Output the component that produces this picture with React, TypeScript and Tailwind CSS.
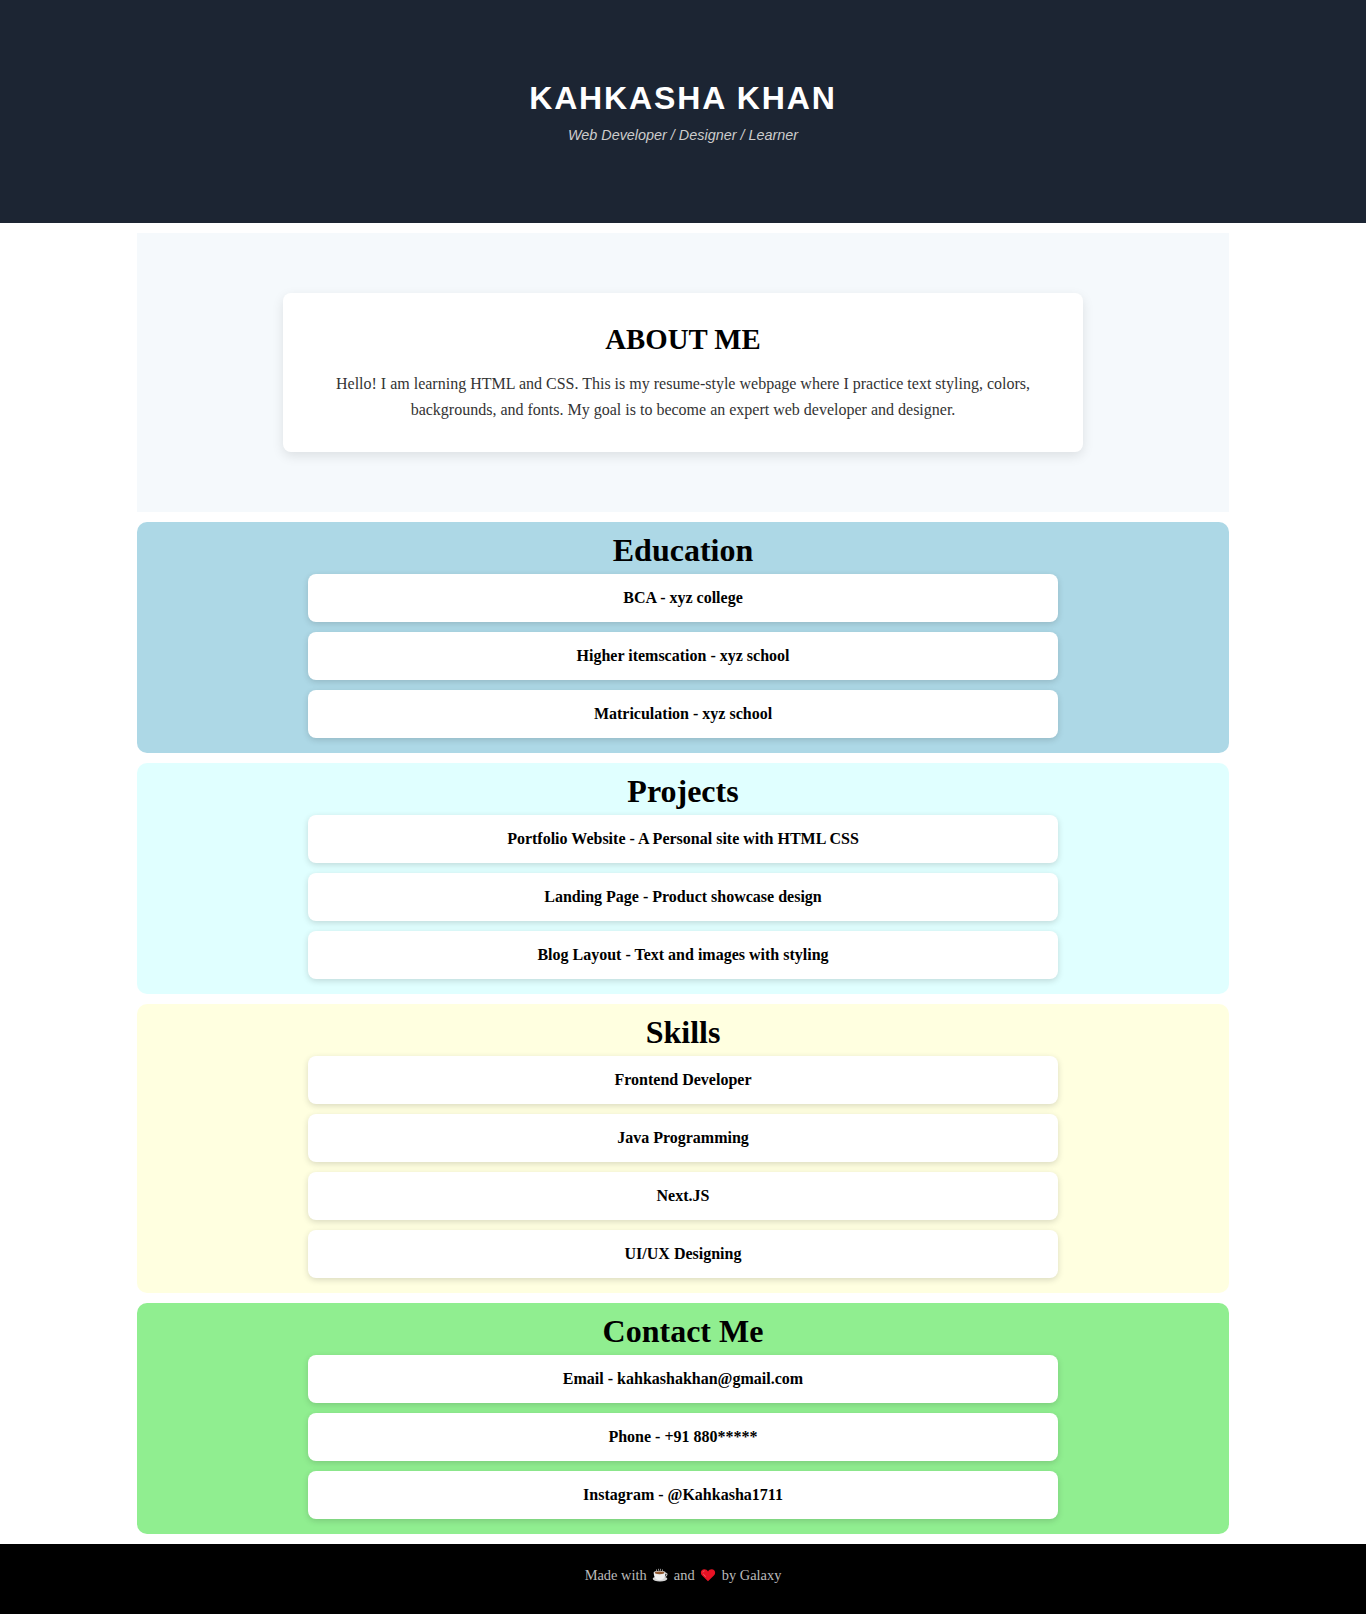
import React from "react";

type Group = { title: string; tone: string; items: string[] };

const groups: Group[] = [
  { title: "Education", tone: "bg-[#add8e6]", items: ["BCA - xyz college", "Higher itemscation - xyz school", "Matriculation - xyz school"] },
  { title: "Projects", tone: "bg-[#e0ffff]", items: ["Portfolio Website - A Personal site with HTML CSS", "Landing Page - Product showcase design", "Blog Layout - Text and images with styling"] },
  { title: "Skills", tone: "bg-[#ffffe0]", items: ["Frontend Developer", "Java Programming", "Next.JS", "UI/UX Designing"] },
  { title: "Contact Me", tone: "bg-[#90ee90]", items: ["Email - kahkashakhan@gmail.com", "Phone - +91 880*****", "Instagram - @Kahkasha1711"] },
];

function Section({ title, tone, items }: Group) {
  return (
    <section className={`mx-auto mb-2.5 w-[1092px] rounded-[10px] pt-2.5 pb-[15px] text-center ${tone}`}>
      <h2 className="text-[32px] leading-[37px] font-bold">{title}</h2>
      <ul className="mx-auto mt-[5px] flex w-[750px] flex-col gap-2.5">
        {items.map((item) => (
          <li key={item} className="rounded-lg bg-white py-[15px] text-base leading-[18px] font-bold shadow-[0_2px_6px_rgba(0,0,0,0.15)]">
            {item}
          </li>
        ))}
      </ul>
    </section>
  );
}

function Coffee() {
  return (
    <svg className="mx-[2px] mt-px h-[15px] w-[16px] shrink-0" viewBox="0 0 16 15" fill="none" aria-label="coffee">
      <path d="M4.5 3.2V1.4M6.5 2.6V.8M8.5 2.6V.8M10.5 3.2V1.4" stroke="#8c8c8c" strokeWidth="1" />
      <path d="M12.5 5.2h1.6c1.4 0 1.2 3.2-1.8 3.6" stroke="#c9c9c9" strokeWidth="1.1" />
      <ellipse cx="8" cy="10.8" rx="7.3" ry="2.6" fill="#d5d5d5" />
      <path d="M1.7 4.6h11.8c0 4.5-2 7.6-5.9 7.6S1.7 9.1 1.7 4.6Z" fill="#f0f0f0" />
      <ellipse cx="7.6" cy="4.6" rx="5.9" ry="1.9" fill="#e4e4e4" />
      <ellipse cx="7.6" cy="4.8" rx="4.8" ry="1.4" fill="#8e562e" />
    </svg>
  );
}

function Heart() {
  return (
    <svg className="mx-[2px] mt-px h-[15px] w-[16px] shrink-0" viewBox="0 0 16 15" aria-label="love">
      <path d="M8 13.2 2.1 7.6C-.4 4.9 1.2 1.3 4.3 1.3c1.6 0 2.9.8 3.7 2.1.8-1.3 2.1-2.1 3.7-2.1 3.1 0 4.7 3.6 2.2 6.3Z" fill="#e81224" />
      <path d="M2.8 4.4c.2-1 .8-1.5 1.7-1.5M3.2 6l2.6 2.6" stroke="#f4606a" strokeWidth="1" fill="none" />
    </svg>
  );
}

export default function App() {
  return (
    <div className="bg-white font-['Liberation_Serif',serif] text-black">
      <header className="h-[223px] bg-[#1c2533] pt-20 text-center font-['Liberation_Sans',sans-serif]">
        <h1 className="text-[32px] leading-[36px] font-bold tracking-[1.88px] text-white">KAHKASHA KHAN</h1>
        <p className="mt-[11px] text-[14.4px] leading-4 text-[#cccccc] italic">Web Developer / Designer / Learner</p>
      </header>
      <section className="mx-auto my-2.5 w-[1092px] bg-[#f5f9fc] py-[60px]">
        <div className="mx-auto h-[159px] w-[800px] rounded-lg bg-white p-[30px] text-center shadow-[0_4px_12px_rgba(0,0,0,0.1)]">
          <h2 className="text-[28.8px] leading-[33px] font-bold">ABOUT ME</h2>
          <p className="mt-[15px] text-base leading-[25.6px] text-[#333333]">
            Hello! I am learning HTML and CSS. This is my resume-style webpage where I practice text styling, colors, backgrounds, and fonts. My goal is to become an expert web developer and designer.
          </p>
        </div>
      </section>
      {groups.map((group) => (
        <Section key={group.title} {...group} />
      ))}
      <footer className="flex h-[70px] justify-center gap-[3.6px] bg-black pt-[23px] text-[14.4px] leading-4 text-[#bbbbbb]">
        <span>Made with</span>
        <Coffee />
        <span>and</span>
        <Heart />
        <span>by Galaxy</span>
      </footer>
    </div>
  );
}
